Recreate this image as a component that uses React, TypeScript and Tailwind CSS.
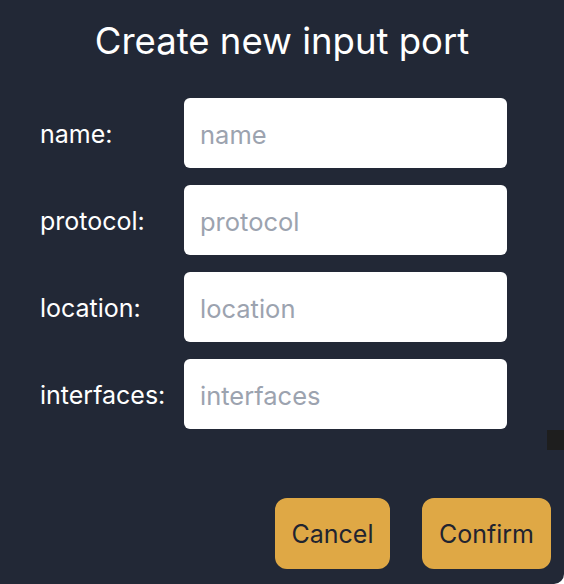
import React from "react";

const fields = ["name", "protocol", "location", "interfaces"];

export default function App() {
  return (
    <div
      className="relative w-[564px] h-[584px] bg-[#222836] flex flex-col overflow-hidden rounded-br-[10px]"
      style={{ fontFamily: "Inter, 'Noto Sans', sans-serif" }}
    >
      <h1 className="text-center text-white text-[36.5px] leading-[40px] mt-[21px] font-normal">
        Create new input port
      </h1>
      <div className="mt-[37px] ml-[40px] flex flex-col gap-[17px]">
        {fields.map((f) => (
          <div key={f} className="flex items-center">
            <label className="w-[144px] mt-[4px] text-white text-[25px]">{f}:</label>
            <input
              placeholder={f}
              className="w-[323px] h-[70px] rounded-[6px] bg-white px-[16px] pt-[2px] text-[25.5px] text-gray-900 placeholder:text-[#9ca3af] outline-none"
            />
          </div>
        ))}
      </div>
      <div className="mt-auto mb-[15px] mr-[13px] flex justify-end gap-[32px]">
        <button className="w-[115px] h-[71px] pt-[3px] rounded-[12px] bg-[#dfa845] text-[#1f2430] text-[25px]">
          Cancel
        </button>
        <button className="w-[129px] h-[71px] pt-[3px] rounded-[12px] bg-[#dfa845] text-[#1f2430] text-[25px]">
          Confirm
        </button>
      </div>
      <div className="absolute left-[547px] top-[430px] w-[17px] h-[20px] bg-[#1e1e1e]" />
    </div>
  );
}
